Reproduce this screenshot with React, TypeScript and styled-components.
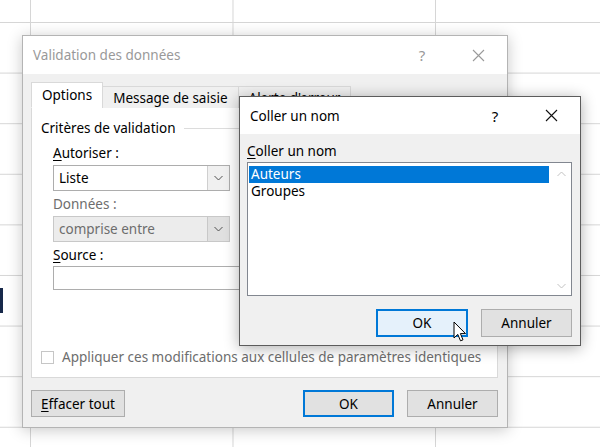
import React from "react";
import styled, { createGlobalStyle } from "styled-components";

const Global = createGlobalStyle`
  html, body { margin: 0; padding: 0; }
  body {
    width: 600px; height: 447px; overflow: hidden; background: #fff;
    font-family: "Segoe UI", "Noto Sans", "Open Sans", sans-serif;
    font-size: 13.5px; color: #000;
  }
`;

const Sheet = styled.div`
  position: relative;
  width: 600px;
  height: 447px;
  overflow: hidden;
  background-color: #fff;
  background-image:
    linear-gradient(to right, #d6d6d6 1px, transparent 1px),
    linear-gradient(to bottom, #d6d6d6 1px, transparent 1px);
  background-size: 202.5px 100%, 100% 50.6px;
  background-position: 30px 0, 0 22px;
`;

const CellMark = styled.div`
  position: absolute;
  left: 0;
  top: 288px;
  width: 3px;
  height: 25px;
  background: #17284a;
`;

const Window = styled.div<{ $left: number; $top: number; $w: number; $h: number; $active?: boolean }>`
  position: absolute;
  z-index: ${(p) => (p.$active ? 2 : 1)};
  left: ${(p) => p.$left}px;
  top: ${(p) => p.$top}px;
  width: ${(p) => p.$w}px;
  height: ${(p) => p.$h}px;
  box-sizing: border-box;
  border: 1px solid ${(p) => (p.$active ? "#5c5c5c" : "#b4b4b4")};
  background: #f0f0f0;
  display: flex;
  flex-direction: column;
  box-shadow: 0 2px 14px rgba(0, 0, 0, ${(p) => (p.$active ? 0.32 : 0.22)});
`;

const TitleBar = styled.div<{ $h: number; $pad: number }>`
  height: ${(p) => p.$h}px;
  flex: none;
  background: #fff;
  display: flex;
  align-items: center;
  padding-left: ${(p) => p.$pad}px;
`;

const TitleText = styled.div<{ $inactive?: boolean }>`
  flex: 1;
  color: ${(p) => (p.$inactive ? "#999" : "#000")};
  font-size: 13.5px;
`;

const TitleButton = styled.div<{ $w: number; $inactive?: boolean }>`
  width: ${(p) => p.$w}px;
  display: flex;
  justify-content: center;
  align-items: center;
  color: ${(p) => (p.$inactive ? "#999" : "#000")};
  font-size: 15px;
`;

const Help = styled.span`
  font-family: "Segoe UI", "Noto Sans", sans-serif;
`;

const CloseIcon = ({ color }: { color: string }) => (
  <svg width="13" height="13" viewBox="0 0 13 13">
    <path d="M1 1 L12 12 M12 1 L1 12" stroke={color} strokeWidth="1.1" fill="none" />
  </svg>
);

const MainBody = styled.div`
  flex: 1;
  display: flex;
  flex-direction: column;
  padding: 8px 9px 9px 8px;
`;

const TabStrip = styled.div`
  display: flex;
  align-items: flex-end;
  height: 26px;
  flex: none;
  position: relative;
  z-index: 1;
`;

const Tab = styled.div<{ $active?: boolean }>`
  height: ${(p) => (p.$active ? 26 : 22)}px;
  box-sizing: border-box;
  padding: 0 10px;
  display: flex;
  align-items: center;
  background: ${(p) => (p.$active ? "#fff" : "#f0f0f0")};
  border: 1px solid #d9d9d9;
  border-bottom: ${(p) => (p.$active ? "1px solid #fff" : "none")};
  margin-left: ${(p) => (p.$active ? 0 : -1)}px;
`;

const Panel = styled.div`
  height: 271px;
  flex: none;
  box-sizing: border-box;
  margin-top: -1px;
  background: #fff;
  border: 1px solid #d9d9d9;
  display: flex;
  flex-direction: column;
  padding: 12px 10px 12px 9px;
`;

const GroupHeader = styled.div`
  display: flex;
  align-items: center;
  gap: 8px;
  line-height: 16px;
  height: 16px;
  &::after {
    content: "";
    flex: 1;
    height: 1px;
    background: #dcdcdc;
  }
`;

const Fields = styled.div`
  display: flex;
  flex-direction: column;
  margin-left: 12px;
  margin-top: 9px;
`;

const Label = styled.div<{ $disabled?: boolean; $gap: number }>`
  line-height: 16px;
  margin-top: ${(p) => p.$gap}px;
  color: ${(p) => (p.$disabled ? "#6d6d6d" : "#000")};
`;

const U = styled.span`
  text-decoration: underline;
  text-underline-offset: 2px;
`;

const Combo = styled.div<{ $disabled?: boolean }>`
  width: 177px;
  height: 26px;
  box-sizing: border-box;
  margin-top: 4px;
  border: 1px solid ${(p) => (p.$disabled ? "#c8c8c8" : "#adadad")};
  background: ${(p) => (p.$disabled ? "#ececec" : "#fff")};
  color: ${(p) => (p.$disabled ? "#6d6d6d" : "#000")};
  display: flex;
  align-items: stretch;
`;

const ComboText = styled.div`
  flex: 1;
  display: flex;
  align-items: center;
  padding-left: 5px;
`;

const ComboButton = styled.div<{ $disabled?: boolean }>`
  width: 21px;
  border-left: 1px solid ${(p) => (p.$disabled ? "#c8c8c8" : "#cfcfcf")};
  background: ${(p) => (p.$disabled ? "#e0e0e0" : "#f0f0f0")};
  display: flex;
  align-items: center;
  justify-content: center;
`;

const Chevron = ({ up, color = "#505050" }: { up?: boolean; color?: string }) => (
  <svg width="9" height="6" viewBox="0 0 9 6">
    <path d={up ? "M0.5 5 L4.5 1 L8.5 5" : "M0.5 1 L4.5 5 L8.5 1"} stroke={color} strokeWidth="1" fill="none" />
  </svg>
);

const TextInput = styled.div`
  width: 420px;
  height: 24px;
  box-sizing: border-box;
  margin-top: 3px;
  border: 1px solid #adadad;
  background: #fff;
`;

const CheckRow = styled.div`
  margin-top: auto;
  display: flex;
  align-items: center;
  gap: 8px;
  color: #6d6d6d;
  line-height: 16px;
`;

const CheckBox = styled.div`
  width: 13px;
  height: 13px;
  box-sizing: border-box;
  border: 1px solid #c6c6c6;
  background: #fff;
`;

const Footer = styled.div<{ $mt: number }>`
  display: flex;
  align-items: center;
  gap: 13px;
  margin-top: ${(p) => p.$mt}px;
`;

const Spacer = styled.div`
  flex: 1;
`;

const Button = styled.div<{ $w: number; $default?: boolean; $hover?: boolean; $h?: number }>`
  width: ${(p) => p.$w}px;
  height: ${(p) => p.$h ?? 27}px;
  box-sizing: border-box;
  display: flex;
  align-items: center;
  justify-content: center;
  background: ${(p) => (p.$hover ? "#e5f1fb" : "#e1e1e1")};
  border: ${(p) => (p.$default ? "2px solid #0078d7" : "1px solid #adadad")};
`;

const PasteBody = styled.div`
  flex: 1;
  display: flex;
  flex-direction: column;
  padding: 9px 8px 8px 7px;
`;

const ListLabel = styled.div`
  line-height: 16px;
`;

const ListBox = styled.div`
  margin-top: 3px;
  height: 134px;
  box-sizing: border-box;
  border: 1px solid #828790;
  background: #fff;
  display: flex;
`;

const Items = styled.div`
  flex: 1;
  padding: 3px 2px 3px 1px;
`;

const Item = styled.div<{ $selected?: boolean }>`
  height: 17px;
  line-height: 17px;
  padding-left: 2px;
  overflow: hidden;
  background: ${(p) => (p.$selected ? "#0078d7" : "transparent")};
  color: ${(p) => (p.$selected ? "#fff" : "#000")};
`;

const ScrollBar = styled.div`
  width: 20px;
  background: #fff;
  display: flex;
  flex-direction: column;
  justify-content: space-between;
  align-items: center;
  padding: 8px 0 6px;
`;

const Cursor = styled.svg`
  position: absolute;
  z-index: 3;
  left: 453px;
  top: 321px;
`;

export default function App() {
  return (
    <>
      <Global />
      <Sheet>
        <CellMark />
        <Window $left={22} $top={35} $w={486} $h={393}>
          <TitleBar $h={38} $pad={10}>
            <TitleText $inactive>Validation des données</TitleText>
            <TitleButton $w={54} $inactive>
              <Help>?</Help>
            </TitleButton>
            <TitleButton $w={58} $inactive>
              <CloseIcon color="#9a9a9a" />
            </TitleButton>
          </TitleBar>
          <MainBody>
            <TabStrip>
              <Tab $active>Options</Tab>
              <Tab>Message de saisie</Tab>
              <Tab>Alerte d'erreur</Tab>
            </TabStrip>
            <Panel>
              <GroupHeader>Critères de validation</GroupHeader>
              <Fields>
                <Label $gap={0}>
                  <U>A</U>utoriser :
                </Label>
                <Combo>
                  <ComboText>Liste</ComboText>
                  <ComboButton>
                    <Chevron />
                  </ComboButton>
                </Combo>
                <Label $gap={5} $disabled>
                  Données :
                </Label>
                <Combo $disabled>
                  <ComboText>comprise entre</ComboText>
                  <ComboButton $disabled>
                    <Chevron />
                  </ComboButton>
                </Combo>
                <Label $gap={5}>
                  <U>S</U>ource :
                </Label>
                <TextInput />
              </Fields>
              <CheckRow>
                <CheckBox />
                Appliquer ces modifications aux cellules de paramètres identiques
              </CheckRow>
            </Panel>
            <Footer $mt={12}>
              <Button $w={94}>
                <span>
                  <U>E</U>ffacer tout
                </span>
              </Button>
              <Spacer />
              <Button $w={91} $default>
                OK
              </Button>
              <Button $w={91}>Annuler</Button>
            </Footer>
          </MainBody>
        </Window>

        <Window $left={239} $top={96} $w={342} $h={250} $active>
          <TitleBar $h={37} $pad={10}>
            <TitleText>Coller un nom</TitleText>
            <TitleButton $w={54}>
              <Help>?</Help>
            </TitleButton>
            <TitleButton $w={58}>
              <CloseIcon color="#111" />
            </TitleButton>
          </TitleBar>
          <PasteBody>
            <ListLabel>
              <U>C</U>oller un nom
            </ListLabel>
            <ListBox>
              <Items>
                <Item $selected>Auteurs</Item>
                <Item>Groupes</Item>
              </Items>
              <ScrollBar>
                <Chevron up color="#c2c2c2" />
                <Chevron color="#c2c2c2" />
              </ScrollBar>
            </ListBox>
            <Footer $mt={13}>
              <Spacer />
              <Button $w={92} $h={28} $hover $default>
                OK
              </Button>
              <Button $w={91} $h={28}>
                Annuler
              </Button>
            </Footer>
          </PasteBody>
        </Window>

        <Cursor width="14" height="22" viewBox="0 0 14 22">
          <path
            d="M1 1 L1 17 L4.8 13.4 L7.5 19.8 L10 18.8 L7.4 12.6 L12.5 12.6 Z"
            fill="#fff"
            stroke="#000"
            strokeWidth="1"
            strokeLinejoin="round"
          />
        </Cursor>
      </Sheet>
    </>
  );
}
